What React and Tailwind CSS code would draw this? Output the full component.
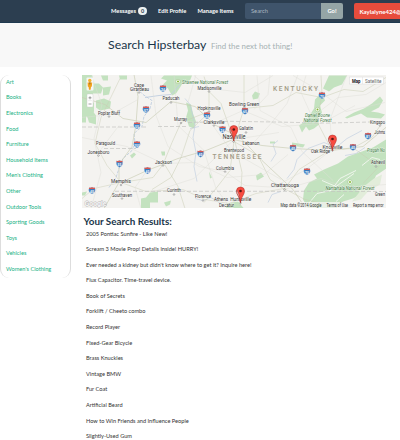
import React from 'react';

const categories = ['Art', 'Books', 'Electronics', 'Food', 'Furniture', 'Household Items', "Men's Clothing", 'Other', 'Outdoor Tools', 'Sporting Goods', 'Toys', 'Vehicles', "Women's Clothing"];

const results = [
  '2005 Pontiac Sunfire - Like New!',
  'Scream 3 Movie Prop! Details inside! HURRY!',
  "Ever needed a kidney but didn't know where to get it? Inquire here!",
  'Flux Capacitor. Time-travel device.',
  'Book of Secrets',
  'Forklift / Cheeto combo',
  'Record Player',
  'Fixed-Gear Bicycle',
  'Brass Knuckles',
  'Vintage BMW',
  'Fur Coat',
  'Artificial Beard',
  'How to Win Friends and Influence People',
  'Slightly-Used Gum',
];

// [label, centre x, baseline y, width, font size]
const cities = [
  ['Cape', 139, 86, 10, 5],
  ['Girardeau', 139.5, 90.6, 19, 5],
  ['Paducah', 171, 99.8, 17, 5.3],
  ['Poplar Bluff', 109, 114, 22, 5.3],
  ['Murray', 180.5, 120.5, 13, 5.3],
  ['Madisonville', 209.5, 89, 24, 5.3],
  ['Hopkinsville', 209, 109.3, 23, 5.3],
  ['Clarksville', 214, 123.5, 21, 5.3],
  ['Bowling Green', 244, 105, 30, 5.5],
  ['Gallatin', 246, 129.7, 14, 5.2],
  ['Nashville', 234, 138.7, 23, 6.4],
  ['Lebanon', 251, 144.3, 17, 5.2],
  ['Brentwood', 234, 151.3, 20, 5.2],
  ['Columbia', 225, 169.4, 18, 5.2],
  ['Paragould', 105.5, 144.3, 19, 5.2],
  ['Jonesboro', 98.5, 153, 22, 5.4],
  ['Jackson', 163.5, 163, 17, 5.4],
  ['Memphis', 121, 182.7, 20, 6],
  ['Southaven', 122, 196, 20, 5.2],
  ['Corinth', 174, 191.8, 14, 5.2],
  ['Florence', 203, 197.7, 16, 5.2],
  ['Athens', 221, 200.6, 14, 5],
  ['Decatur', 226.5, 206, 15, 5],
  ['Huntsville', 240.7, 200.2, 21, 5.8],
  ['Chattanooga', 285, 186.8, 28, 5.8],
  ['Knoxville', 332.5, 148, 20, 6],
  ['Oak Ridge', 320.5, 152.8, 19, 5.2],
  ['Kingspo', 377.5, 123, 15, 5.2],
  ['Johns', 379.7, 133, 11, 5.4],
  ['Ashevil', 378, 163.7, 14, 5.4],
  ['Green', 380, 195, 10, 5.4],
];

const forests = [
  ['Shawnee National Forest', 205, 83, 46],
  ['Daniel Boone', 317.5, 116.5, 25],
  ['National Forest', 317.5, 121, 28],
  ['Nantahala National Forest', 350, 189, 49],
  ['Pisgah No', 376, 151.3, 18],
];

const shields = [
  ['24', 163, 88], ['57', 146, 109], ['55', 137, 125], ['24', 207, 115], ['65', 245, 110.5],
  ['24', 222.5, 129], ['75', 322, 95], ['81', 368, 135.5], ['155', 137, 144], ['55', 119.5, 163.3],
  ['40', 147.5, 170], ['40', 92, 190], ['40', 200.5, 153.3], ['40', 293, 147.5], ['40', 353, 146.7],
  ['75', 307, 171],
];

const towns = [
  [139, 92], [171, 102], [109, 116], [209, 91], [209, 111], [214, 125], [244, 107], [98.5, 155],
  [163, 165], [122, 198], [174, 194], [225, 171], [203, 200], [284.5, 189], [246, 132], [380, 125],
  [376, 166], [121, 184.5], [181, 122.5], [233.5, 141], [332.5, 150], [240.5, 202.5],
];

function Shield({ label, x, y }) {
  return (
    <g transform={`translate(${x} ${y})`}>
      <path d="M-2.8-3Q-1.4-2.4 0-3.2Q1.4-2.4 2.8-3Q4.6 1.6 0 3.6Q-4.6 1.6-2.8-3Z" fill="#3a7abe" stroke="#e8eef5" strokeWidth=".4" />
      <path d="M-2.8-3Q-1.4-2.4 0-3.2Q1.4-2.4 2.8-3L3.1-1.6H-3.1Z" fill="#dc5950" />
      <text y="2" textAnchor="middle" fontSize="3.3" fontWeight="700" fill="#fff">{label}</text>
    </g>
  );
}

function Pin({ x, y }) {
  return (
    <g transform={`translate(${x} ${y})`}>
      <path d="M0 11.5C-.5 6.2-4-4-4 0C-4 4-.5 6 0 11.5ZM0 11.5C-.5 6-4 4-4 0A4 4 0 0 1 4 0C4 4 .5 6 0 11.5Z" fill="#f84b40" stroke="#aa302b" strokeWidth=".5" />
      <circle r="1.3" fill="#571612" />
    </g>
  );
}

function MapView() {
  return (
    <svg viewBox="82 74.5 304 133.5" className="block h-[133.5px] w-[304px] font-['Roboto',sans-serif]" role="img">
      <rect x="82" y="74" width="304" height="135" fill="#f4f3f0" />
      <g fill="#c3e2bf">
        <path d="M82 74h10l2 9h5l4 4-2 6h-8l-2 9h3v9l-4 7-4-2v6h-4Z" />
        <path d="M96 100l8-2 7 3-1 7-10 2-4-3ZM101 75h7v5h-5ZM119 75h8v4h-7ZM103 87l8-1-2 8-6 1ZM87 115l6-4 3 4v9l-7-2Z" />
        <path d="M164 75h28l-2 5-7 2-3 5-4 6-4 2-4-7-5-4 4-4-6-2Z" />
        <path d="M186 102l5 2 2 9 3 8-2 7-5-2-3-9 2-7Z" />
        <path d="M252 95l3-4 5 2-2 5-5 1Z" />
        <path d="M329 75h18l-5 9-8 3-5 4-6-3Z" />
        <path d="M322 92l3 8-5 5 2 7-4 6 1 6-5 4-5 2-3-4-4 6-3-7 6-4 4-5 5-8 1-9Z" />
        <path d="M380 96l-8 7-8 5-10 4-9 5 2 1 14-5 6 4 14 1 4-4-7-2-7-1 8-4 4-7Z" />
        <path d="M386 139l-13 8-11 4-14 5-10 7-14 6-10 5 3 4-8 4-5 8-1 9 5 9h28l7-7 10-3 10-5 9-8 4-10 12-8 8-5Z" />
        <path d="M141 198l5-1 4-5 8-1v11h-8v6h-9ZM227 203l11-2 6 7h-18ZM256 175l5-3 3 4-7 4ZM270 141h5v2h-5ZM292 142l13 2-2 3-11-2ZM209 171l3 6-2 1ZM130 155l4-3 2 2-4 4ZM161 151h4v4h-3ZM82 192l5-1-2 4h-3ZM164 202l7-2-1 4-4 2Z" />
      </g>
      <path d="M374 178l8-4-2 10-12 7-7 8-9 2 8-10-7-3 12-3Z" fill="#e2edda" />
      <g fill="none" stroke="#fafaf8" strokeWidth=".8">
        <path d="M307 205l10-12 14-3 9-12 16-8M322 180l14 6 18-13M336 201l8-7M362 165l10-8 8 2" />
      </g>
      <g fill="none" stroke="#bfcee0" strokeWidth=".9">
        <path d="M137 88l6 6 9 6-2 8-6 8-2 10-8 7 1 9-3 8-9 8-4 10-3 9-7 10" strokeDasharray="3 1.2" />
        <path d="M145 97l14-2 12-1 9-10" />
        <path d="M185 98l5 6 3 12 2 9-2 12 3 15-2 14 3 15M190 128l9-2M195 198l8 2 8-3 10 6M287 178l7-9 3-10 11-11 16-6 12 5 11-9 15-8M278 140l-5 4 3 9-5 8M281 191l-9 3-4 8M365 147l-9 6-11 2" strokeWidth=".65" />
      </g>
      <g fill="none" stroke="#c9ccb3" strokeWidth=".65">
        <path d="M82 97l23 7 18 14 23 4 25-21 24 5 21 19 24 12 22 23 31 29 12 18M121 182l26-12 31-12 28-8 27-11 29 6 31 3 38 2 32-4 24-20M134 74l4 22-2 28-4 22-13 18v18l-15 26" />
        <path d="M82 198l12-10 27-6 25 9 37-2 22 10 24 4 27-10 28-5 21 11 31 7M121 182l-14-17-12-22 6-26 19-39" strokeWidth=".45" />
        <path d="M234 140l-7-20-6-17-12-12-5-15M234 140l10-32v-34M244 108l29-3 23-13 26 5 22-8 19 2 23-14M234 141l-4 29-14 18-12 14M235 141l7 31-2 34M234 141l24 14 12 24 16 11" strokeWidth=".5" />
        <path d="M332 150l-15-29 5-27-1-19M284 189l15-20 32-20 23-1 18 13 14 3M209 89v23l-19 18-9 27-10 20-19 12M121 182l32-5 10-13 9-22 9-20 28-11M164 163l14 23 7 22M381 124l-9 13-18 10M380 165l-17 18" strokeWidth=".5" />
      </g>
      <g fill="none" stroke="#deded6" strokeWidth=".45">
        <path d="M91 74l11 30-8 34 7 34-10 36M119 125l-22 29M138 99l-27 15-29 3M151 75l5 40 12 31 31 20 26 5 20 14 33 2M174 74l4 51 26 25 12 38 15 20M194 75l15 13 36 4 28-17M187 121l27 2 29-13 39 16 39-3 34-18M212 124l20 27 49 28M252 144l19-21 16-20 11-29M257 75l3 35 31 17 11 24 31 29M293 75l26 15 27 21 39-9M277 185l29-16 26-20-2-30 17-45M284 189l37-11 24 9 41-3M82 137l45 9 36 17 32-1 32 15 37-3 24-20M147 170l-12 17 6 21M196 74l-8 28M154 191l40-13 40-39 45-7M270 74l-2 20-14 15M306 75l-5 17 10 22M386 82l-20 12-28 3-16 12" />
      </g>
      <path d="M82 126.5h66M158 126h30M188 122l42-1.2 50 .8 47 1 59-1.5M104 148h32M115 190.8H300l86 .2" fill="none" stroke="#c3c3c0" strokeWidth=".7" strokeDasharray="4 2" />
      {towns.map(([x, y]) => <circle key={`${x}-${y}`} cx={x} cy={y} r=".8" fill="#fff" stroke="#666" strokeWidth=".45" />)}
      {[[178, 81], [317.5, 109], [350, 181.5]].map(([x, y]) => (
        <g key={x}><circle cx={x} cy={y} r="2.2" fill="#fff" stroke="#91b977" strokeWidth=".5" /><circle cx={x} cy={y} r="1" fill="#80b52c" /></g>
      ))}
      <g fontSize="6.6" fontWeight="500" fill="#a29b86">
        <text x="273" y="90" textLength="45">KENTUCKY</text>
        <text x="212.5" y="158.8" textLength="49">TENNESSEE</text>
      </g>
      <g textAnchor="middle" stroke="#fff" strokeWidth=".8" strokeOpacity=".6" paintOrder="stroke">
        {forests.map(([t, x, y, w]) => <text key={t} x={x} y={y} textLength={w} lengthAdjust="spacingAndGlyphs" fontSize="4.8" fontStyle="italic" fill="#447a45">{t}</text>)}
        {cities.map(([t, x, y, w, s]) => <text key={t} x={x} y={y} textLength={w} lengthAdjust="spacingAndGlyphs" fontSize={s} fill="#333">{t}</text>)}
      </g>
      {shields.map(([t, x, y]) => <Shield key={`${x}-${y}`} label={t} x={x} y={y} />)}
      <Pin x={233.8} y={129} />
      <Pin x={332.5} y={138.5} />
      <Pin x={240.5} y={190.5} />

      <rect x="86.5" y="77" width="7" height="13" rx="1" fill="#f5f6f5" />
      <circle cx="89.8" cy="80" r="1.7" fill="#f5b130" />
      <path d="M87.6 82h4.6l-.4 4-.8.5-.4 2.8H89l-.4-2.8-.8-.5Z" fill="#f0a31e" />
      <path d="M88.9 82h1.9l-.9 2.6Z" fill="#a36820" />
      <rect x="87" y="93.5" width="6" height="13" rx=".8" fill="#fff" stroke="#ccc" strokeWidth=".4" />
      <path d="M88.5 97.3h3M90 95.8v3M88.5 103.5h3" stroke="#777" strokeWidth=".7" />
      <path d="M88 100.2h4" stroke="#ddd" strokeWidth=".5" />

      <rect x="349.5" y="76.5" width="34" height="7" fill="#fff" stroke="#d8d8d8" strokeWidth=".5" />
      <path d="M362.5 76.5v7" stroke="#ddd" strokeWidth=".5" />
      <text x="352" y="82" fontSize="5" fontWeight="700" textLength="8.5" lengthAdjust="spacingAndGlyphs" fill="#111">Map</text>
      <text x="365" y="82" fontSize="5" textLength="16.5" lengthAdjust="spacingAndGlyphs" fill="#666">Satellite</text>

      <text x="84.5" y="205" fontSize="8" fontWeight="500" textLength="22" lengthAdjust="spacingAndGlyphs" fill="#fff" stroke="#b0b0b0" strokeWidth=".8" paintOrder="stroke">Google</text>
      <rect x="279" y="201.5" width="107" height="6.5" fill="#f5f5f3" fillOpacity=".75" />
      <g fontSize="4.6" fill="#333">
        <text x="280.5" y="206" textLength="41" lengthAdjust="spacingAndGlyphs">Map data ©2014 Google</text>
        <text x="326.5" y="206" textLength="21.5" lengthAdjust="spacingAndGlyphs">Terms of Use</text>
        <text x="353" y="206" textLength="30.5" lengthAdjust="spacingAndGlyphs">Report a map error</text>
      </g>
    </svg>
  );
}

export default function App() {
  return (
    <div className="h-[440px] w-[400px] overflow-hidden bg-white font-['Lato',sans-serif] text-[5.65px] text-[#333]">
      <nav className="flex h-[23px] items-center overflow-hidden border-b border-[#1f3a50] bg-[#2c3e50] pl-[111px] text-[5.75px] font-bold whitespace-nowrap text-white">
        <a className="flex w-[47px] shrink-0 items-center gap-[2px]">
          Messages
          <span className="flex h-[8px] w-[9px] items-center justify-center rounded-full bg-[#ecf0f1] text-[5.5px] text-[#2c3e50]">0</span>
        </a>
        <a className="w-[39.5px] shrink-0">Edit Profile</a>
        <a className="w-[47.5px] shrink-0">Manage Items</a>
        <div className="flex h-4 w-[98px] shrink-0">
          <span className="flex w-[76px] items-center rounded-l-[2px] bg-[#3f546b] pl-[6px] font-normal text-[#aab6c1]">Search</span>
          <span className="flex w-[22px] items-center justify-center rounded-r-[2px] bg-[#95a5a6]">Go!</span>
        </div>
        <span className="ml-[10.5px] flex h-4 w-[60px] shrink-0 items-center rounded-[2px] bg-[#e74c3c] pl-[6px] text-[6px]">Kaylalyne424@</span>
      </nav>
      <header className="flex h-11 items-baseline bg-[#f8f8f8] pt-[14px] pl-[108px] leading-4 whitespace-nowrap">
        <h1 className="w-[103px] text-[12.3px] text-[#193549]">Search Hipsterbay</h1>
        <p className="text-[7.9px] text-[#a5b1b3]">Find the next hot thing!</p>
      </header>
      <main className="flex pt-[7.5px]">
        <aside className="h-[203px] w-[71px] shrink-0 rounded-[9px] border-x border-[#ddd] pl-[5px] text-[#18b184]">
          <ul className="-mt-[0.7px]">
            {categories.map((c) => <li key={c} className="h-[15.6px] leading-[15.6px] whitespace-nowrap">{c}</li>)}
          </ul>
        </aside>
        <section className="ml-[11px] w-[304px] shrink-0">
          <MapView />
          <h2 className="mt-[7px] ml-[1.5px] h-[12px] text-[9.85px] leading-[12px] font-bold text-[#193549]">Your Search Results:</h2>
          <ul className="-mt-[1.5px] ml-[4px]">
            {results.map((r) => <li key={r} className="h-[15.6px] leading-[15.6px] whitespace-nowrap">{r}</li>)}
          </ul>
        </section>
      </main>
    </div>
  );
}
